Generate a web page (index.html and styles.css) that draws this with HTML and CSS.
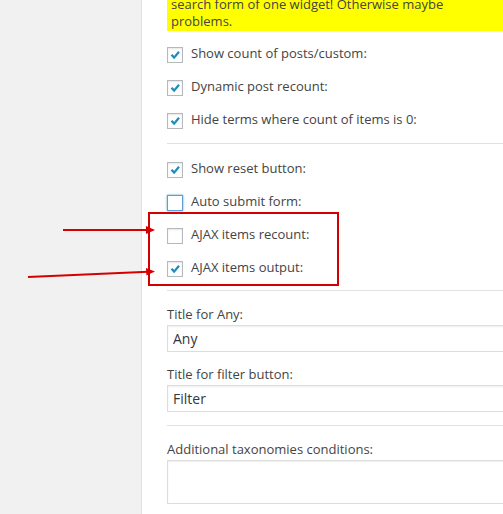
FILE: index.html
```html
<!DOCTYPE html>
<html>
<head>
<meta charset="utf-8">
<link rel="stylesheet" href="styles.css">
</head>
<body>
<div class="page">
  <aside class="sidebar"></aside>
  <main class="panel">
    <div class="notice">search form of one widget! Otherwise maybe<br>problems.</div>

    <div class="checks first">
      <div class="row"><span class="cb"><svg viewBox="0 0 16 16"><polyline points="4,7.8 7,11 12.6,4.4"/></svg></span><span class="lbl">Show count of posts/custom:</span></div>
      <div class="row"><span class="cb"><svg viewBox="0 0 16 16"><polyline points="4,7.8 7,11 12.6,4.4"/></svg></span><span class="lbl">Dynamic post recount:</span></div>
      <div class="row"><span class="cb"><svg viewBox="0 0 16 16"><polyline points="4,7.8 7,11 12.6,4.4"/></svg></span><span class="lbl">Hide terms where count of items is 0:</span></div>
    </div>

    <hr class="sep sep-a">

    <div class="checks">
      <div class="row"><span class="cb"><svg viewBox="0 0 16 16"><polyline points="4,7.8 7,11 12.6,4.4"/></svg></span><span class="lbl">Show reset button:</span></div>
      <div class="row"><span class="cb focus"></span><span class="lbl">Auto submit form:</span></div>
      <div class="row"><span class="cb"></span><span class="lbl">AJAX items recount:</span></div>
      <div class="row"><span class="cb"><svg viewBox="0 0 16 16"><polyline points="4,7.8 7,11 12.6,4.4"/></svg></span><span class="lbl">AJAX items output:</span></div>
    </div>

    <hr class="sep sep-b">

    <div class="field f1">
      <label class="flabel">Title for Any:</label>
      <input class="text" type="text" value="Any">
    </div>
    <div class="field f2">
      <label class="flabel">Title for filter button:</label>
      <input class="text" type="text" value="Filter">
    </div>

    <hr class="sep sep-c">

    <div class="field f3">
      <label class="flabel">Additional taxonomies conditions:</label>
      <textarea class="area"></textarea>
    </div>
    <p class="desc">Example: tax_1_slug=1,2,3|tax_2_slug=4,5 (use it in the hidden field)</p>
  </main>

  <div class="redbox"></div>
  <svg class="arrows" width="160" height="90" viewBox="0 200 160 90">
    <line x1="63" y1="230" x2="148" y2="230"/>
    <polygon points="146,226 155,230 146,234"/>
    <line x1="28" y1="277" x2="148" y2="271.8"/>
    <polygon points="146,268 155,271.5 146.4,275.5"/>
  </svg>
</div>
</body>
</html>
```

FILE: styles.css
```css
html, body {
  margin: 0;
  padding: 0;
}
body {
  width: 503px;
  height: 514px;
  overflow: hidden;
  background: #f1f1f1;
  font-family: "Open Sans", "Noto Sans", sans-serif;
  font-size: 13px;
  color: #444;
}
.page {
  position: relative;
  display: flex;
  height: 514px;
  overflow: hidden;
}
.sidebar {
  flex: 0 0 141px;
  background: #f1f1f1;
  border-right: 1px solid #e2e2e2;
}
.panel {
  flex: 0 0 420px;
  background: #fff;
  padding-left: 25px;
  box-sizing: border-box;
}
.notice {
  margin-top: -4px;
  background: #ffff00;
  padding: 0 4px 1px;
  line-height: 17px;
  color: #444;
}
.checks {
  display: flex;
  flex-direction: column;
  gap: 17px;
  margin-top: 18px;
}
.checks.first {
  margin-top: 16px;
}
.row {
  display: flex;
  align-items: flex-start;
  gap: 8px;
  height: 16px;
}
.cb {
  flex: 0 0 16px;
  width: 16px;
  height: 16px;
  box-sizing: border-box;
  border: 1px solid #b4b9be;
  background: #fff;
  box-shadow: inset 0 1px 2px rgba(0,0,0,0.1);
  display: block;
}
.cb svg {
  display: block;
  width: 14px;
  height: 14px;
  margin: 0;
}
.cb polyline {
  fill: none;
  stroke: #1e8cbe;
  stroke-width: 2.6;
  stroke-linecap: butt;
  stroke-linejoin: miter;
}
.cb.focus {
  border-color: #5b9dd9;
  box-shadow: 0 0 2px rgba(30,140,190,0.8);
}
.lbl {
  line-height: 13px;
  white-space: nowrap;
}
.sep {
  border: 0;
  border-top: 1px solid #e1e1e1;
  height: 0;
  margin: 0;
}
.sep-a { margin-top: 14px; }
.sep-b { margin-top: 13px; }
.sep-c { margin-top: 13px; }
.field {
  display: flex;
  flex-direction: column;
}
.f1 { margin-top: 14px; }
.f2 { margin-top: 13px; }
.f3 { margin-top: 14px; }
.flabel {
  line-height: 18px;
  margin-bottom: 2px;
}
.text {
  box-sizing: border-box;
  width: 380px;
  height: 27px;
  margin: 0;
  padding: 0 5px;
  border: 1px solid #ddd;
  box-shadow: inset 0 1px 2px rgba(0,0,0,0.07);
  background: #fff;
  font-family: "Open Sans", "Noto Sans", sans-serif;
  font-size: 14px;
  color: #32373c;
  outline: none;
}
.area {
  box-sizing: border-box;
  width: 380px;
  height: 44px;
  margin: 0;
  border: 1px solid #ddd;
  box-shadow: inset 0 1px 2px rgba(0,0,0,0.07);
  background: #fff;
  font-family: "Open Sans", "Noto Sans", sans-serif;
  font-size: 14px;
  display: block;
}
.desc {
  margin: 8px 0 0;
  line-height: 18px;
  white-space: nowrap;
}
.redbox {
  position: absolute;
  left: 148px;
  top: 212px;
  width: 191px;
  height: 74px;
  box-sizing: border-box;
  border: 2px solid #d40000;
}
.arrows {
  position: absolute;
  left: 0;
  top: 200px;
}
.arrows line {
  stroke: #d40000;
  stroke-width: 2;
}
.arrows polygon {
  fill: #d40000;
}
```
